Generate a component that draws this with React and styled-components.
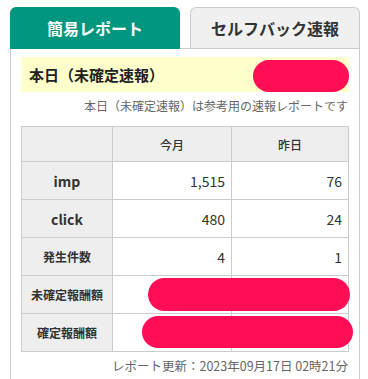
import React from "react";
import styled, { createGlobalStyle } from "styled-components";

const GlobalStyle = createGlobalStyle`
  body {
    margin: 0;
    background: #ffffff;
    font-family: "Noto Sans CJK JP", "Noto Sans", sans-serif;
    color: #333333;
  }
`;

export default function App() {
  // 表示用のデモデータ
  const rows = [
    { label: "imp", month: "1,515", yesterday: "76", labelSize: "14px" },
    { label: "click", month: "480", yesterday: "24", labelSize: "14px" },
    { label: "発生件数", month: "4", yesterday: "1" },
    { label: "未確定報酬額", month: "", yesterday: "", mask: { left: 35, width: 202, top: 2, height: 33 } },
    { label: "確定報酬額", month: "", yesterday: "", mask: { left: 29, width: 211, top: 2, height: 32 } },
  ];

  return (
    <Wrap>
      <GlobalStyle />
      {/* タブ */}
      <TabRow>
        <Tab active>簡易レポート</Tab>
        <Tab>セルフバック速報</Tab>
      </TabRow>
      <Panel>
        {/* 本日 */}
        <TodayBar>
          本日（未確定速報）
          <Mask style={{ right: 0, top: 3, width: 96, height: 32 }} />
        </TodayBar>
        <Note>本日（未確定速報）は参考用の速報レポートです</Note>
        {/* レポート表 */}
        <Table>
          <colgroup>
            <col width="91" />
            <col width="119" />
            <col width="117" />
          </colgroup>
          <thead>
            <tr>
              <HeadCell />
              <HeadCell>今月</HeadCell>
              <HeadCell>昨日</HeadCell>
            </tr>
          </thead>
          <tbody>
            {rows.map((row) => (
              <tr key={row.label}>
                <LabelCell size={row.labelSize}>{row.label}</LabelCell>
                <ValueCell>
                  {row.month}
                  {row.mask && (
                    <Mask
                      style={{
                        left: row.mask.left,
                        width: row.mask.width,
                        top: row.mask.top,
                        height: row.mask.height,
                      }}
                    />
                  )}
                </ValueCell>
                <ValueCell>{row.yesterday}</ValueCell>
              </tr>
            ))}
          </tbody>
        </Table>
        <Updated>レポート更新：2023年09月17日 02時21分</Updated>
      </Panel>
    </Wrap>
  );
}

const Wrap = styled.div`
  padding: 7px 8px 0 10px;
  width: 350px;
`;

const TabRow = styled.div`
  display: flex;
  gap: 10px;
`;

const Tab = styled.div`
  box-sizing: border-box;
  width: 170px;
  height: ${(props) => (props.active ? "42px" : "41px")};
  margin-bottom: ${(props) => (props.active ? "-1px" : "0")};
  position: relative;
  z-index: 1;
  display: flex;
  align-items: center;
  justify-content: center;
  border-radius: 6px 6px 0 0;
  font-size: 16px;
  font-weight: bold;
  background: ${(props) => (props.active ? "#00967f" : "#f0f0f0")};
  color: ${(props) => (props.active ? "#ffffff" : "#333333")};
  border: ${(props) => (props.active ? "none" : "1px solid #cccccc")};
  border-bottom: none;
`;

const Panel = styled.div`
  box-sizing: border-box;
  width: 350px;
  border: 1px solid #cccccc;
  padding: 8px 10px 12px;
`;

const TodayBar = styled.div`
  position: relative;
  height: 35px;
  display: flex;
  align-items: center;
  padding-left: 8px;
  background: #ffffcc;
  font-size: 15px;
  font-weight: bold;
  color: #222222;
`;

const Mask = styled.span`
  position: absolute;
  background: #ff0d55;
  border-radius: 17px;
`;

const Note = styled.div`
  text-align: right;
  font-size: 12px;
  line-height: 18px;
  color: #666666;
  padding: 5px 1px 0 0;
`;

const Table = styled.table`
  width: 328px;
  margin-top: 11px;
  border-collapse: collapse;
  table-layout: fixed;
  border: 1px solid #cccccc;
`;

const HeadCell = styled.th`
  height: 34px;
  padding: 0;
  background: #eeeeee;
  border: 1px solid #cccccc;
  font-size: 12px;
  font-weight: 500;
  color: #333333;
  text-align: center;
`;

const LabelCell = styled.th`
  height: 37px;
  padding: 0;
  background: #eeeeee;
  border: 1px solid #cccccc;
  font-size: ${(props) => props.size || "12px"};
  font-weight: bold;
  color: #333333;
  text-align: center;
`;

const ValueCell = styled.td`
  position: relative;
  height: 37px;
  padding: 0 6px 0 0;
  border: 1px solid #cccccc;
  font-size: 14px;
  color: #333333;
  text-align: right;
`;

const Updated = styled.div`
  text-align: right;
  font-size: 12.5px;
  line-height: 18px;
  color: #666666;
  padding: 5px 1px 0 0;
`;
